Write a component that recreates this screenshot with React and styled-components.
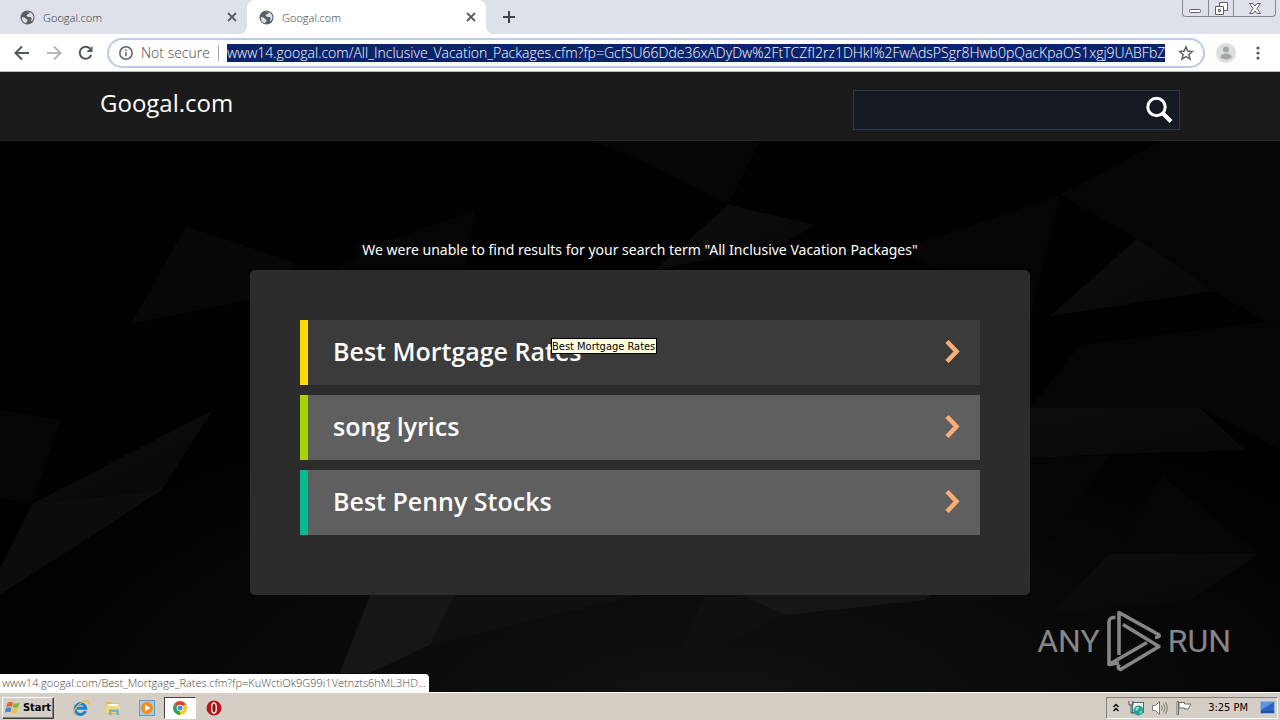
import React from 'react';
import styled, { createGlobalStyle, css } from 'styled-components';

const Global = createGlobalStyle`
  *, *::before, *::after { box-sizing: border-box; }
  body { margin: 0; background: #000; font-family: "Open Sans", sans-serif; }
  button, input { font: inherit; color: inherit; padding: 0; border: 0; background: none; border-radius: 0; outline: 0; }
  button { cursor: pointer; display: flex; align-items: center; justify-content: center; }
  a { color: inherit; text-decoration: none; }
  svg { display: block; flex: none; }
`;

const Desktop = styled.div`
  min-height: 100vh;
  display: flex;
  flex-direction: column;
`;

/* ---------- browser chrome ---------- */

const TabStrip = styled.header`
  display: flex;
  height: 34px;
  padding-left: 8px;
  background: #dee1e9;
  color: #303438;
`;

const Tab = styled.div`
  position: relative;
  display: flex;
  align-items: center;
  width: 239px;
  padding: 0 10px 0 12px;
  font-size: 11px;
  font-weight: 300;
  ${(p) => p.$active && css`
    background: #fff;
    border-radius: 8px 8px 0 0;
    &::before, &::after {
      content: '';
      position: absolute;
      bottom: 0;
      width: 8px;
      height: 8px;
    }
    &::before { right: 100%; background: radial-gradient(circle at 0 0, transparent 8px, #fff 8px); }
    &::after { left: 100%; background: radial-gradient(circle at 100% 0, transparent 8px, #fff 8px); }
  `}
`;

const TabTitle = styled.span`
  flex: 1;
  margin-left: 8px;
`;

const NewTab = styled.button`
  width: 46px;
`;

const WindowControls = styled.div`
  display: flex;
  height: 17px;
  margin: 0 4px 0 auto;
  border: 1px solid #84888e;
  border-top: 0;
  border-radius: 0 0 4px 4px;
`;

const WindowButton = styled.button`
  width: ${(p) => (p.$wide ? 42 : 25)}px;
  & + & { border-left: 1px solid #84888e; }
`;

const Toolbar = styled.div`
  display: flex;
  align-items: center;
  height: 38px;
  padding: 0 6px;
  background: #fff;
  border-bottom: 1px solid #b4b6b8;
`;

const ToolButton = styled.button`
  width: 32px;
  height: 32px;
`;

const AddressBar = styled.div`
  flex: 1;
  min-width: 0;
  display: flex;
  align-items: center;
  height: 30px;
  margin: 0 5px;
  padding: 0 1px 0 10px;
  border: 2px solid #b9cbea;
  border-radius: 15px;
  font-size: 14px;
  font-weight: 300;
  color: #45494d;
`;

const Security = styled.button`
  gap: 8px;
  flex: none;
`;

const Divider = styled.span`
  width: 1px;
  height: 16px;
  margin: 0 8px;
  background: #a5a8ac;
`;

const Url = styled.input`
  flex: 1;
  min-width: 0;
  height: 18px;
  margin-right: 5px;
  background: #0a246a;
  color: #fff;
  line-height: 18px;
`;

/* ---------- parked page ---------- */

const SiteHeader = styled.div`
  background: #1b1b1b;
  border-bottom: 1px solid #222;
  padding: 0 100px;
`;

const SiteInner = styled.div`
  display: flex;
  justify-content: space-between;
  align-items: flex-start;
  height: 68px;
`;

const SiteName = styled.h1`
  margin: 14px 0 0;
  font-size: 24px;
  line-height: 34px;
  font-weight: 400;
  color: #fff;
`;

const Search = styled.form`
  display: flex;
  width: 327px;
  height: 40px;
  margin-top: 18px;
  border: 1px solid #2f3a4c;
  background: #151a22;
  color: #fff;
`;

const SearchInput = styled.input`
  flex: 1;
  min-width: 0;
  padding: 0 10px;
`;

const SearchButton = styled.button`
  width: 40px;
`;

const Page = styled.main`
  position: relative;
  flex: 1;
  display: flex;
  flex-direction: column;
  align-items: center;
  padding: 98px 20px 97px;
  overflow: hidden;
  color: #fff;
`;

const Backdrop = styled.svg`
  position: absolute;
  inset: 0;
  width: 100%;
  height: 100%;
`;

const Notice = styled.p`
  position: relative;
  margin: 0 0 9px;
  font-family: "Noto Sans", "Open Sans", sans-serif;
  font-size: 14px;
  line-height: 22px;
`;

const Panel = styled.nav`
  position: relative;
  display: flex;
  flex-direction: column;
  gap: 10px;
  width: 100%;
  max-width: 780px;
  padding: 50px 50px 60px;
  background: #2c2c2c;
  border-radius: 5px;
`;

const ResultLink = styled.a`
  position: relative;
  display: flex;
  align-items: center;
  justify-content: space-between;
  height: 65px;
  padding: 0 20px 3px 25px;
  border-left: 8px solid ${(p) => p.$accent};
  background: ${(p) => (p.$hovered ? '#3b3b3b' : '#5f5f5f')};
  font-size: 25px;
  font-weight: 600;
`;

const Tooltip = styled.span`
  position: absolute;
  left: 243px;
  top: 18px;
  height: 16px;
  padding: 0 1px 0 0;
  border: 1px solid #000;
  background: #ffffe1;
  color: #000;
  font: 11px/15px "DejaVu Sans Condensed", sans-serif;
  white-space: nowrap;
`;

const StatusBubble = styled.div`
  position: absolute;
  left: 0;
  bottom: 0;
  height: 18px;
  padding: 0 3px 0 2px;
  border-radius: 0 4px 0 0;
  background: #fff;
  color: #45484b;
  font-size: 11px;
  font-weight: 300;
  line-height: 18px;
`;

const Watermark = styled.div`
  position: absolute;
  right: 49px;
  bottom: 20px;
  display: flex;
  align-items: center;
  gap: 6px;
  color: #868686;
  font: 32px/62px Roboto, "Liberation Sans", sans-serif;
`;

/* ---------- task bar ---------- */

const Taskbar = styled.footer`
  display: flex;
  align-items: center;
  height: 28px;
  padding: 2px 2px 0;
  border-top: 1px solid #fff;
  background: #d5cec5;
  color: #000;
  font: 11px/14px "DejaVu Sans Condensed", sans-serif;
`;

const StartButton = styled.button`
  gap: 2px;
  width: 52px;
  height: 22px;
  margin-right: 10px;
  border: 1px solid;
  border-color: #fff #404040 #404040 #fff;
  box-shadow: inset -1px -1px #808080;
  font-weight: 700;
`;

const Launcher = styled.button`
  width: ${(p) => (p.$pressed ? 32 : 33)}px;
  height: 22px;
  ${(p) => p.$pressed && css`
    margin: 0 1px;
    background: #fff;
    border: 1px solid;
    border-color: #404040 #fff #fff #404040;
  `}
`;

const Tray = styled.div`
  display: flex;
  align-items: center;
  gap: 8px;
  height: 22px;
  margin-left: auto;
  padding: 0 2px 0 5px;
  border: 1px solid;
  border-color: #808080 #fff #fff #808080;
`;

const Clock = styled.time`
  margin: 0 4px 0 8px;
`;

/* ---------- drawings ---------- */

const Globe = () => (
  <svg width="15" height="15" viewBox="0 0 15 15">
    <circle cx="7.5" cy="7.5" r="7" fill="#5c6064" />
    <path d="M1.8 7.2C4 7.2 5 7.6 5.6 8.6S7.6 9.4 7.6 10.6 6.4 12 6 13.2C3.4 12.6 1.7 10.4 1.8 7.2zM6 2.2c1.4-.5 3.2-.3 4.2.2L9 3.8 7.2 4.4 6.6 5.8 8.4 7h2.4l1 1.4-.8 2 .6.9c2.2-2 2.6-5.2.4-7.6C10.2 1.6 8 1.3 6 2.2z" fill="#dee1e6" />
  </svg>
);

const Close = () => (
  <svg width="10" height="10" viewBox="0 0 10 10" stroke="#5a5e62" strokeWidth="1.8">
    <path d="M1 1l8 8M9 1L1 9" />
  </svg>
);

const Arrow = ({ color, flip }) => (
  <svg width="16" height="16" viewBox="0 0 16 16" fill="none" stroke={color} strokeWidth="2">
    <path d={flip ? 'M1 8h13M8 1.5L14.5 8 8 14.5' : 'M15 8H2M8 1.5L1.5 8 8 14.5'} />
  </svg>
);

const Reload = () => (
  <svg width="16" height="16" viewBox="0 0 16 16">
    <path d="M13.3 10A6 6 0 1 1 12.2 3.7" fill="none" stroke="#55595d" strokeWidth="2" />
    <path d="M14.5 1v6h-6z" fill="#55595d" />
  </svg>
);

const Info = () => (
  <svg width="14" height="14" viewBox="0 0 14 14" fill="none" stroke="#5f6368" strokeWidth="1.5">
    <circle cx="7" cy="7" r="6.2" />
    <path d="M7 6.3v4M7 3.5v1.5" />
  </svg>
);

const Star = () => (
  <svg width="16" height="16" viewBox="0 0 16 16" fill="none" stroke="#5f6368" strokeWidth="1.5">
    <path d="M8 1.8l1.8 4.3 4.6.4-3.5 3 1.1 4.6L8 11.7l-4 2.4 1.1-4.6-3.5-3 4.6-.4z" />
  </svg>
);

const Avatar = () => (
  <svg width="20" height="20" viewBox="0 0 20 20">
    <circle cx="10" cy="10" r="10" fill="#dcdddf" />
    <circle cx="10" cy="6.5" r="3" fill="#a4a6a9" />
    <ellipse cx="10" cy="13.5" rx="5.5" ry="3" fill="#a4a6a9" />
  </svg>
);

const Dots = () => (
  <svg width="4" height="14" viewBox="0 0 4 14" fill="#55595d">
    <circle cx="2" cy="2" r="1.6" />
    <circle cx="2" cy="7" r="1.6" />
    <circle cx="2" cy="12" r="1.6" />
  </svg>
);

const Magnifier = () => (
  <svg width="28" height="28" viewBox="0 0 28 28" fill="none" stroke="#fff">
    <circle cx="11.5" cy="11" r="8.7" strokeWidth="3" />
    <path d="M17.5 17l8.5 8.5" strokeWidth="4" />
  </svg>
);

const Chevron = () => (
  <svg width="15" height="24" viewBox="0 0 15 24" fill="none" stroke="#ffab76" strokeWidth="4.6">
    <path d="M2 2.500L11.500 12.500 2 22.500" />
  </svg>
);

const Facets = () => (
  <Backdrop viewBox="0 141 1280 551" preserveAspectRatio="xMidYMid slice" aria-hidden="true">
    <defs>
      <radialGradient id="glow" cx="55%" cy="105%" r="60%">
        <stop offset="0" stopColor="#131313" />
        <stop offset="0.5" stopColor="#0a0a0a" />
        <stop offset="1" stopColor="#010101" />
      </radialGradient>
      <linearGradient id="facet" x1="0" y1="0" x2="1" y2="1">
        <stop offset="0" stopColor="#0e0e0e" />
        <stop offset="1" stopColor="#070707" />
      </linearGradient>
    </defs>
    <rect y="141" width="1280" height="551" fill="url(#glow)" />
    <g fill="#050505">
      <path d="M475 210L385 242 330 270H465z" />
      <path d="M590 141H760L728 205 640 160z" />
      <path d="M897 250L1060 195 1030 320 1030 270H940z" />
      <path d="M1060 195L1160 141H1280V330L1213 291 1137 239z" />
      <path d="M1080 345L1280 320V450L1200 408H1030z" />
      <path d="M0 410L60 420 32 504 0 498z" />
      <path d="M1163 476L1260 555H1110z" />
      <path d="M1030 458L1110 455 1053 540 1030 520z" />
    </g>
    <path d="M186 226L300 264 250 300 131 324z" fill="#070707" />
    <g fill="url(#facet)">
      <path d="M728 205L815 225 780 245 655 270z" />
      <path d="M1137 239L1213 291 1050 316z" />
      <path d="M1030 408H1200L1245 450 1110 454 1030 458z" />
      <path d="M213 410L187 450 162 490 32 504z" />
      <path d="M1110 554H1258L1190 600 1050 613z" />
    </g>
    <path d="M32 504L162 490 0 595V568z" fill="#0c0c0c" />
    <path d="M370 595H455L430 645 370 673H340z" fill="#161616" />
    <path d="M455 595H640L430 645z" fill="#101010" />
    <path d="M740 595H930L925 600 785 615z" fill="#161616" />
    <path d="M705 595H740L785 615 670 670z" fill="#101010" />
  </Backdrop>
);

const PlayMark = () => (
  <svg width="56" height="62" viewBox="0 0 56 62" fill="none" stroke="#868686" strokeWidth="3.6" strokeLinejoin="round">
    <path d="M13 45V2.500L52.500 24.500Q55 27 49 27.500" />
    <path d="M9.500 7.500Q3 7 3 12V54.500L41 32.500" />
    <path d="M17 14.500L53 36.500 14.500 59.500Q11 59 13 54.500" />
    <path d="M3 54.500L13 53" />
  </svg>
);

const WinFlag = () => (
  <svg width="16" height="16" viewBox="0 0 16 16">
    <path d="M2.5 3Q5 1 8 2.5L6.8 7Q4 5.5 1.2 7.3z" fill="#e8602c" />
    <path d="M8.8 3Q11.5 4.3 14.5 2.5L13.2 7.2Q10.5 8.8 7.6 7.3z" fill="#7fb93c" />
    <path d="M1 8.1Q3.8 6.4 6.5 8L5.3 12.3Q2.7 11 0 12.6z" fill="#3f84d6" />
    <path d="M7.4 8.3Q10.2 9.8 13 8.1L11.7 12.6Q9 14 6.2 12.7z" fill="#f7bf2d" />
  </svg>
);

const Explorer = () => (
  <svg width="18" height="16" viewBox="0 0 18 16" fill="none">
    <path d="M13.5 11A5.400 5.400 0 1 1 13.800 8.300H5" stroke="#2080cc" strokeWidth="3" />
    <path d="M2.5 15C-1.5 12 9-.5 16 1c1.5.5 1 2.5.5 3.5" stroke="#e6b83a" strokeWidth="1.3" />
  </svg>
);

const Folder = () => (
  <svg width="17" height="16" viewBox="0 0 17 16">
    <path d="M1 2h5l1 1.5h7V14H1z" fill="#dfbb55" />
    <path d="M2.5 4h11v6h-11z" fill="#fffbe6" />
    <path d="M1 6h14v7H1z" fill="#f3d978" />
    <path d="M4 15V9.5h10V15h-2.5v-3h-5v3z" fill="#6fb2de" />
  </svg>
);

const Media = () => (
  <svg width="16" height="16" viewBox="0 0 16 16">
    <rect x=".5" y=".5" width="15" height="15" fill="#a9cbe8" stroke="#5d9ccc" />
    <circle cx="8" cy="8" r="6" fill="#f28a1c" />
    <path d="M6 4.5L11.5 8 6 11.5z" fill="#fff" />
  </svg>
);

const Chrome = () => (
  <svg width="14" height="14" viewBox="0 0 14 14">
    <path d="M7 7L.94 3.5A7 7 0 0 1 13.06 3.5z" fill="#e0402f" />
    <path d="M7 7L13.06 3.5A7 7 0 0 1 7 14z" fill="#fbc917" />
    <path d="M7 7V14A7 7 0 0 1 .94 3.5z" fill="#2ea351" />
    <circle cx="7" cy="7" r="3.3" fill="#fff" />
    <circle cx="7" cy="7" r="2.5" fill="#4a86ec" />
  </svg>
);

const Opera = () => (
  <svg width="16" height="16" viewBox="0 0 16 16">
    <circle cx="8" cy="8" r="7.5" fill="#b8161c" />
    <ellipse cx="8" cy="8" rx="2.3" ry="5" fill="#8a0c10" stroke="#f6e4e4" strokeWidth="1.5" />
  </svg>
);

const Expand = () => (
  <svg width="8" height="10" viewBox="0 0 8 10" fill="none" stroke="#000" strokeWidth="1.3">
    <path d="M1.5 4L4 1.5 6.5 4M1.5 8L4 5.5 6.5 8" />
  </svg>
);

const Network = () => (
  <svg width="16" height="16" viewBox="0 0 16 16">
    <rect x="4.5" y="2.5" width="11" height="10" fill="#e8f6f4" stroke="#3c7474" />
    <path d="M1 1v4h4V1M3 5v8h4" fill="none" stroke="#555" />
    <circle cx="10.5" cy="10.5" r="5" fill="#2a9d9a" />
    <path d="M7 9q2-3 4-2l-1 3-2 1zM11 12l3-2-1 4z" fill="#8fe0c8" />
  </svg>
);

const Speaker = () => (
  <svg width="16" height="16" viewBox="0 0 16 16" fill="none" stroke="#7d7a75">
    <path d="M.5 5.5h3l4-4v13l-4-4h-3z" fill="#fff" />
    <path d="M9.5 5.5q1.5 2.5 0 5M11.5 3.5q3 4.5 0 9M13.5 2q3.5 6 0 12" />
  </svg>
);

const Flag = () => (
  <svg width="16" height="16" viewBox="0 0 16 16" fill="#fff" stroke="#6f6c68">
    <path d="M1 1.5h1.5v13H1zM3 2.5h5.5v1.5H15l-3 5H8.5V8H3z" />
  </svg>
);

const Monitor = () => (
  <svg width="15" height="13" viewBox="0 0 15 13">
    <rect x=".5" y=".5" width="14" height="12" fill="#2b62c4" stroke="#9bb4d8" />
    <path d="M1 1h13L1 9z" fill="#5f93e4" />
    <path d="M1 11h13" stroke="#183a7c" />
  </svg>
);

const results = [
  { label: 'Best Mortgage Rates', accent: '#ffdc00', hovered: true },
  { label: 'song lyrics', accent: '#a9d200' },
  { label: 'Best Penny Stocks', accent: '#00be8f' },
];

export default function App() {
  return (
    <Desktop>
      <Global />
      <TabStrip>
        {[false, true].map((active) => (
          <Tab key={String(active)} $active={active}>
            <Globe />
            <TabTitle>Googal.com</TabTitle>
            <button aria-label="Close tab"><Close /></button>
          </Tab>
        ))}
        <NewTab aria-label="New tab">
          <svg width="12" height="12" viewBox="0 0 12 12" stroke="#3f4347" strokeWidth="2"><path d="M6 0v12M0 6h12" /></svg>
        </NewTab>
        <WindowControls>
          <WindowButton aria-label="Minimize">
            <svg width="13" height="13" viewBox="0 0 13 13" fill="#fff" stroke="#5c6066"><rect x=".5" y="7.5" width="11" height="3" rx="1" /></svg>
          </WindowButton>
          <WindowButton aria-label="Restore">
            <svg width="13" height="13" viewBox="0 0 13 13" fill="#fff" stroke="#5c6066"><path d="M4.5.5h8v8h-8z" /><path d="M.5 4.5h8v8h-8zM3.5 7.5h2v2h-2z" /></svg>
          </WindowButton>
          <WindowButton $wide aria-label="Close">
            <svg width="12" height="11" viewBox="0 0 12 11" fill="#fff" stroke="#5c6066"><path d="M.5.5h3.5l2 2.5 2-2.5h3.5L8 5.5l3.5 5H8L6 8l-2 2.5H.5L4 5.5z" /></svg>
          </WindowButton>
        </WindowControls>
      </TabStrip>
      <Toolbar>
        <ToolButton aria-label="Back"><Arrow color="#55595d" /></ToolButton>
        <ToolButton aria-label="Forward"><Arrow color="#b5b7ba" flip /></ToolButton>
        <ToolButton aria-label="Reload"><Reload /></ToolButton>
        <AddressBar>
          <Security><Info />Not secure</Security>
          <Divider />
          <Url
            aria-label="Address"
            readOnly
            value="www14.googal.com/All_Inclusive_Vacation_Packages.cfm?fp=GcfSU66Dde36xADyDw%2FtTCZfI2rz1DHkI%2FwAdsPSgr8Hwb0pQacKpaOS1xgj9UABFbZ"
          />
          <ToolButton aria-label="Bookmark"><Star /></ToolButton>
        </AddressBar>
        <ToolButton aria-label="Profile"><Avatar /></ToolButton>
        <ToolButton aria-label="Menu"><Dots /></ToolButton>
      </Toolbar>
      <SiteHeader>
        <SiteInner>
          <SiteName>Googal.com</SiteName>
          <Search onSubmit={(e) => e.preventDefault()}>
            <SearchInput type="text" aria-label="Search" />
            <SearchButton aria-label="Submit search"><Magnifier /></SearchButton>
          </Search>
        </SiteInner>
      </SiteHeader>
      <Page>
        <Facets />
        <Notice>We were unable to find results for your search term "All Inclusive Vacation Packages"</Notice>
        <Panel>
          {results.map((r) => (
            <ResultLink key={r.label} href="#" $accent={r.accent} $hovered={r.hovered}>
              {r.label}
              <Chevron />
              {r.hovered && <Tooltip role="tooltip">{r.label}</Tooltip>}
            </ResultLink>
          ))}
        </Panel>
        <StatusBubble>www14.googal.com/Best_Mortgage_Rates.cfm?fp=KuWctiOk9G99i1Vetnzts6hML3HD...</StatusBubble>
        <Watermark><span>ANY</span><PlayMark /><span>RUN</span></Watermark>
      </Page>
      <Taskbar>
        <StartButton><WinFlag />Start</StartButton>
        <Launcher aria-label="Internet Explorer"><Explorer /></Launcher>
        <Launcher aria-label="File Explorer"><Folder /></Launcher>
        <Launcher aria-label="Media Player"><Media /></Launcher>
        <Launcher $pressed aria-label="Chrome"><Chrome /></Launcher>
        <Launcher aria-label="Opera"><Opera /></Launcher>
        <Tray>
          <Expand />
          <Network />
          <Speaker />
          <Flag />
          <Clock>3:25 PM</Clock>
          <Monitor />
        </Tray>
      </Taskbar>
    </Desktop>
  );
}
